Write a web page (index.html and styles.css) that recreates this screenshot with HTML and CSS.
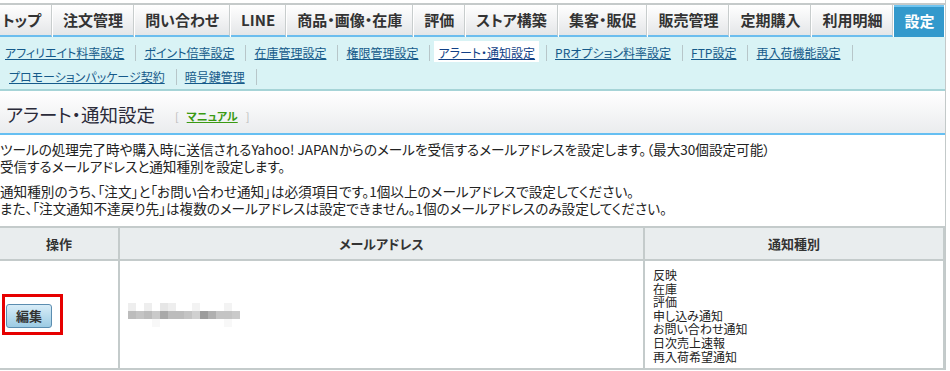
FILE: index.html
```html
<!DOCTYPE html>
<html lang="ja">
<head>
<meta charset="utf-8">
<title>アラート・通知設定</title>
<link rel="stylesheet" href="styles.css">
</head>
<body>
<div class="page">
  <ul class="tabs">
    <li class="tab">トップ</li>
    <li class="tab">注文管理</li>
    <li class="tab">問い合わせ</li>
    <li class="tab">LINE</li>
    <li class="tab">商品・画像・在庫</li>
    <li class="tab">評価</li>
    <li class="tab">ストア構築</li>
    <li class="tab">集客・販促</li>
    <li class="tab">販売管理</li>
    <li class="tab">定期購入</li>
    <li class="tab">利用明細</li>
    <li class="tab tab-active">設定</li>
  </ul>
  <ul class="subnav">
    <li class="sub"><a class="sublink" href="#">アフィリエイト料率設定</a></li>
    <li class="sub"><a class="sublink" href="#">ポイント倍率設定</a></li>
    <li class="sub"><a class="sublink" href="#">在庫管理設定</a></li>
    <li class="sub"><a class="sublink" href="#">権限管理設定</a></li>
    <li class="sub"><a class="sublink sublink-active" href="#">アラート・通知設定</a></li>
    <li class="sub"><a class="sublink" href="#">PRオプション料率設定</a></li>
    <li class="sub"><a class="sublink" href="#">FTP設定</a></li>
    <li class="sub"><a class="sublink" href="#">再入荷機能設定</a></li>
    <li class="sub"><a class="sublink" href="#">プロモーションパッケージ契約</a></li>
    <li class="sub"><a class="sublink" href="#">暗号鍵管理</a></li>
  </ul>
  <div class="heading">
    <h1 class="title">アラート・通知設定</h1>
    <span class="manual"><span class="bracket">[</span><a class="manual-link" href="#">マニュアル</a><span class="bracket">]</span></span>
  </div>
  <div class="desc">
    <p class="para">ツールの処理完了時や購入時に送信されるYahoo! JAPANからのメールを受信するメールアドレスを設定します。（最大30個設定可能）<br>受信するメールアドレスと通知種別を設定します。</p>
    <p class="para">通知種別のうち、「注文」と「お問い合わせ通知」は必須項目です。1個以上のメールアドレスで設定してください。<br>また、「注文通知不達戻り先」は複数のメールアドレスは設定できません。1個のメールアドレスのみ設定してください。</p>
  </div>
  <table class="grid">
    <colgroup>
      <col class="c-op">
      <col class="c-mail">
      <col class="c-kind">
    </colgroup>
    <thead>
      <tr><th class="hcell">操作</th><th class="hcell">メールアドレス</th><th class="hcell">通知種別</th></tr>
    </thead>
    <tbody>
      <tr>
        <td class="cell cell-op"><span class="mark"><button class="btn" type="button">編集</button></span></td>
        <td class="cell cell-mail">
          <div class="blur">
            <i class="px p1"></i><i class="px p0"></i><i class="px p1"></i><i class="px p0"></i><i class="px p2"></i><i class="px p1"></i><i class="px p0"></i><i class="px p0"></i><i class="px p3"></i><i class="px p0"></i><i class="px p0"></i><i class="px p0"></i><i class="px p3"></i><i class="px p0"></i>
            <i class="px m3"></i><i class="px m4"></i><i class="px m3"></i><i class="px m5"></i><i class="px m1"></i><i class="px m3"></i><i class="px m3"></i><i class="px m4"></i><i class="px m6"></i><i class="px m0"></i><i class="px m2"></i><i class="px m4"></i><i class="px m4"></i><i class="px m5"></i>
            <i class="px p0"></i><i class="px p0"></i><i class="px p0"></i><i class="px p4"></i><i class="px p0"></i><i class="px p0"></i><i class="px p0"></i><i class="px p0"></i><i class="px p0"></i><i class="px p0"></i><i class="px p0"></i><i class="px p0"></i><i class="px p4"></i><i class="px p0"></i>
          </div>
        </td>
        <td class="cell cell-kind">反映<br>在庫<br>評価<br>申し込み通知<br>お問い合わせ通知<br>日次売上速報<br>再入荷希望通知</td>
      </tr>
    </tbody>
  </table>
</div>
</body>
</html>
```

FILE: styles.css
```css
* { box-sizing: border-box; }
html, body { margin: 0; padding: 0; background: #fff; }
body {
  font-family: "Noto Sans CJK JP", "Liberation Sans", sans-serif;
  color: #222;
  font-feature-settings: "palt";
  overflow: hidden;
}
.page {
  width: 946px;
  border-right: 1px solid #c3c9c9;
  padding-top: 3px;
}
.tabs {
  list-style: none;
  margin: 0 0 0 -8px;
  padding: 0;
  display: flex;
  border-top: 2px solid #c5caca;
}
.tab {
  height: 32px;
  padding: 0 10px;
  margin-right: 1px;
  border-right: 1px solid #c8cdcd;
  border-bottom: 2px solid #6bbdee;
  background: linear-gradient(#ffffff, #e4e6e8);
  font-size: 15px;
  font-weight: bold;
  color: #333;
  line-height: 30px;
  white-space: nowrap;
}
.tab-active {
  background: #3399cc;
  color: #fff;
  border-top: 2px solid #70c4f0;
  border-bottom: 2px solid #3399cc;
  line-height: 28px;
  border-right: none;
  margin-right: 0;
}
.subnav {
  list-style: none;
  margin: 0;
  padding: 4px 0 0 1px;
  display: flex;
  flex-wrap: wrap;
  background: #d9f3f5;
  border-bottom: 2px solid #a6d4d7;
}
.sub {
  margin: 4px 0;
  padding: 0 7px 0 0;
  border-right: 1px solid #b7c6c9;
  line-height: 16px;
  font-size: 12px;
}
.sublink {
  display: block;
  padding: 0 4px;
  color: #155a8a;
  text-decoration: underline;
  white-space: nowrap;
}
.sub + .sub .sublink { margin-left: 4px; }
.sublink-active {
  background: #fff;
  padding: 4px 4px 1px;
  margin-top: -4px;
  margin-bottom: -1px;
  color: #123f86;
}
.heading {
  display: flex;
  align-items: center;
  height: 44px;
  padding: 0 0 4px 6px;
  background: linear-gradient(#ffffff, #eaecee);
  border-bottom: 2px solid #66bff2;
}
.title {
  margin: 0;
  font-size: 18.5px;
  font-weight: normal;
  line-height: 20px;
  color: #2b2b3a;
  padding-top: 8px;
}
.manual {
  margin-left: 20px;
  padding-top: 11px;
  font-size: 11px;
  display: flex;
  gap: 8px;
}
.bracket { color: #bbb; font-weight: normal; }
.manual-link {
  color: #3a9a12;
  font-weight: bold;
  text-decoration: underline;
}
.desc {
  padding-top: 6px;
  font-size: 13.6px;
  line-height: 17px;
}
.para { margin: 0 0 8px; white-space: nowrap; }
.grid {
  margin: 9px 0 0 -2px;
  width: 947px;
  table-layout: fixed;
  border-collapse: separate;
  border-spacing: 0;
  border-top: 2px solid #c4cbcb;
  border-left: 2px solid #c4cbcb;
}
.c-op { width: 120px; }
.c-mail { width: 525px; }
.c-kind { width: 300px; }
.hcell, .cell {
  border-right: 2px solid #c4cbcb;
  border-bottom: 2px solid #c4cbcb;
}
.hcell {
  height: 33px;
  padding: 0;
  background: #e9edee;
  font-size: 13px;
  font-weight: bold;
  color: #333;
  text-align: center;
}
.cell { vertical-align: middle; padding: 0; }
.cell-op { padding-left: 2px; }
.mark {
  display: inline-block;
  border: 3px solid #e60000;
  padding: 7px 8px 4px 1px;
  line-height: 0;
}
.btn {
  width: 46px;
  height: 24px;
  border: 1px solid #5b8db0;
  border-radius: 3px;
  background: linear-gradient(#d8edf8, #9ccbe3);
  font-family: "Noto Sans CJK JP", sans-serif;
  font-size: 13px;
  font-weight: bold;
  color: #333;
  padding: 0;
  line-height: 20px;
}
.cell-mail { padding-left: 8px; }
.blur {
  display: grid;
  grid-template-columns: repeat(14, 8px);
  grid-auto-rows: 8px;
  width: 112px;
}
.px { display: block; }
.p0 { background: #fff; }
.p1 { background: #eeeeee; }
.p2 { background: #e6e6e6; }
.p3 { background: #f3f3f3; }
.p4 { background: #f8f8f8; }
.m0 { background: #9c9c9c; }
.m1 { background: #a9a9a9; }
.m2 { background: #b0b0b0; }
.m3 { background: #bcbcbc; }
.m4 { background: #c4c4c4; }
.m5 { background: #cacaca; }
.m6 { background: #d0d0d0; }
.cell-kind {
  vertical-align: top;
  padding: 7px 8px 5px;
  font-size: 12px;
  line-height: 13.6px;
  color: #222;
}
```
